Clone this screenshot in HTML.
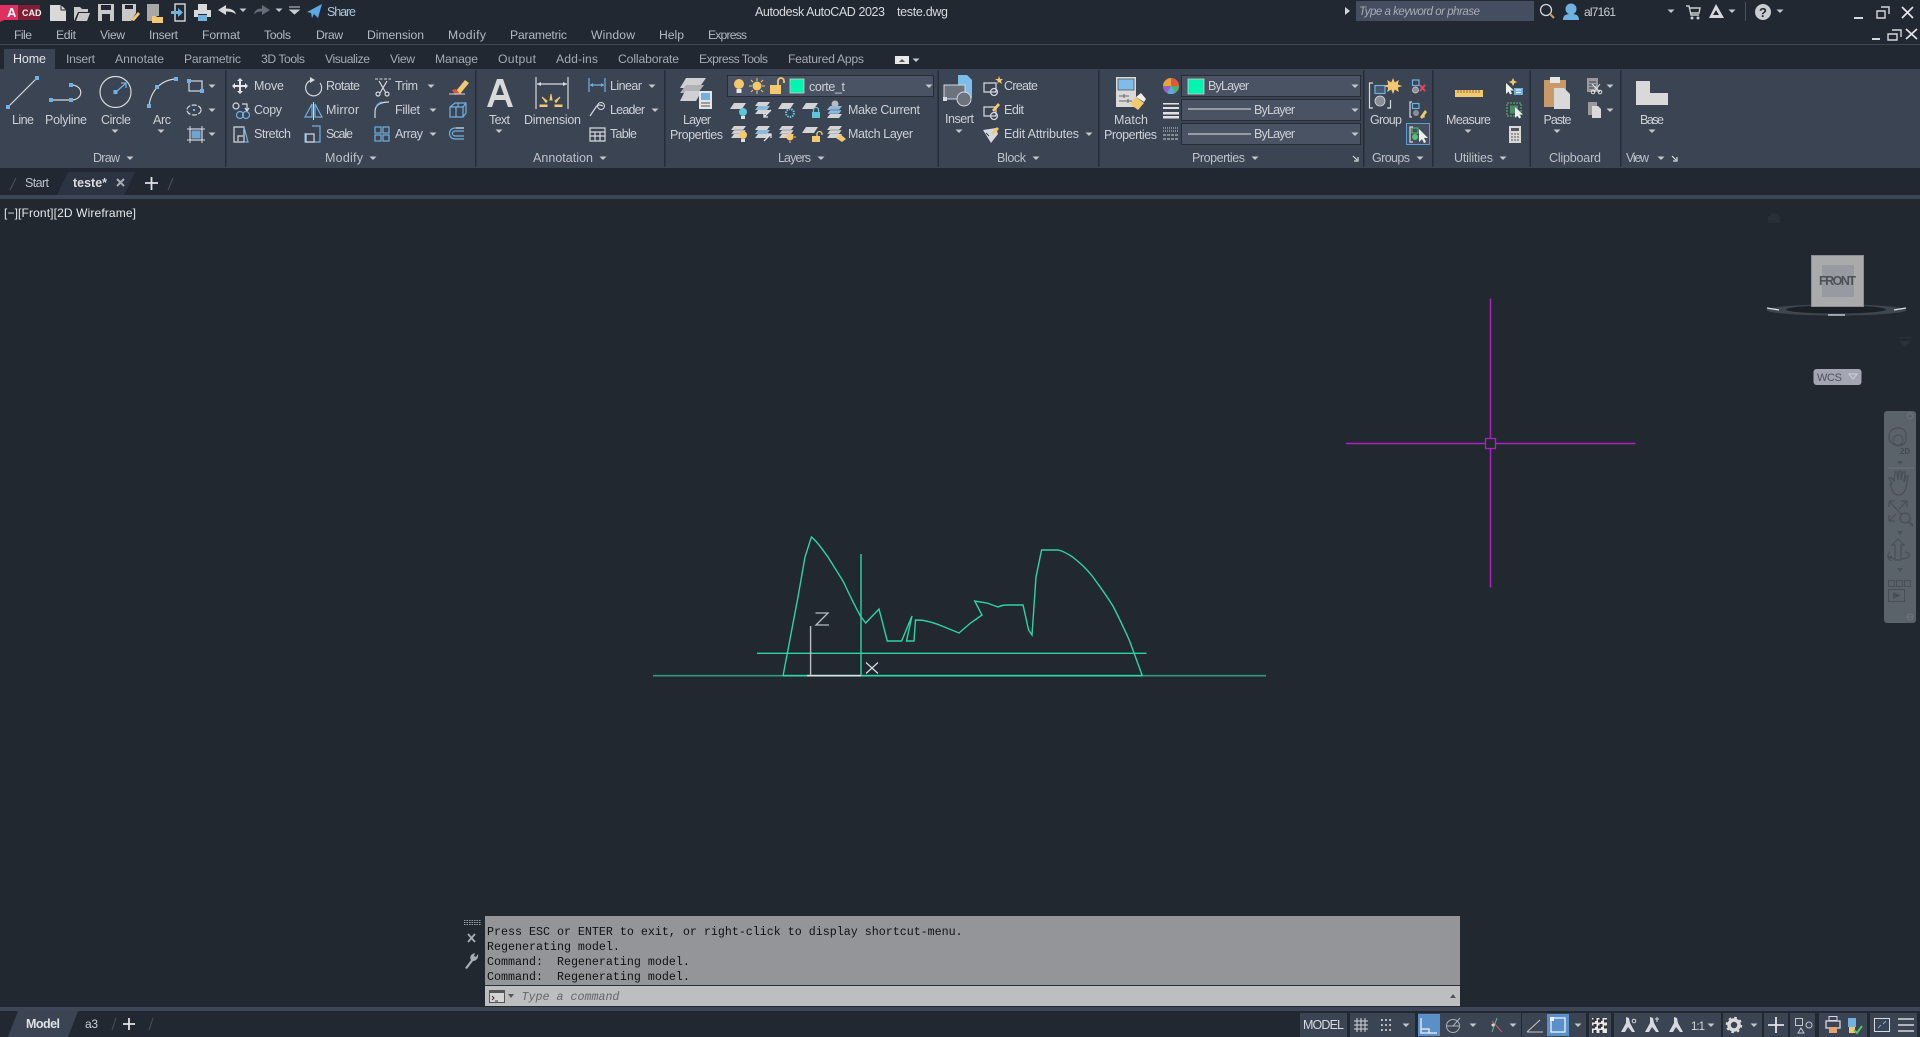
<!DOCTYPE html>
<html><head><meta charset="utf-8"><title>Autodesk AutoCAD 2023 teste.dwg</title>
<style>
html,body{margin:0;padding:0;background:#212830;width:1920px;height:1037px;overflow:hidden}
svg{display:block;position:absolute;left:0;top:0}
text{font-family:"Liberation Sans",sans-serif;font-size:12.5px;fill:#cdd1d7}
.m{fill:#b4b9c1;font-size:12.2px}
.t{fill:#a5abb4;font-size:12.2px}
.p{fill:#bcc1c9}
.c{font-family:"Liberation Mono",monospace;font-size:11.67px;fill:#111;white-space:pre}
.i{stroke:#d6d9dd;stroke-width:1.2;fill:none}
.b{stroke:#6fb1e0;stroke-width:1.2;fill:none}
.g{fill:#d9d9d9}
.bf{fill:#6fb1e0}
.y{fill:#f4c96e}
</style></head><body>
<svg width="1920" height="1037" viewBox="0 0 1920 1037" xmlns="http://www.w3.org/2000/svg">
<defs>
<polygon id="a" points="-3.5,-1.5 3.5,-1.5 0,2" fill="#c4c8ce"/>
<polygon id="l" points="3,0 15,0 11,6 -1,6" fill="#d4d4d4"/>
<g id="st"><polygon points="0,4 12,4 15,0 3,0" fill="#d4d4d4"/><polygon points="0,8 12,8 15,4 3,4" fill="#8db9dc"/><polygon points="0,12 12,12 15,8 3,8" fill="#d4d4d4"/></g>
<rect id="s" x="-2" y="-2" width="4" height="4" fill="#6fb1e0"/>
</defs>

<!-- backgrounds -->
<rect width="1920" height="199" fill="#212832"/>
<rect y="199" width="1920" height="808" fill="#21282f"/>
<rect y="44" width="1920" height="1" fill="#3f4753"/>
<rect y="69" width="1920" height="99" fill="#3b4453"/>
<rect x="4" y="49" width="51" height="20" fill="#3b4453"/>
<rect y="195" width="1920" height="4" fill="#3d4657"/>
<rect y="1007" width="1920" height="4" fill="#3d4657"/>
<rect y="1011" width="1920" height="26" fill="#212832"/>

<!-- logo -->
<polygon points="0,5 18,5 18,20 4,20 0,22" fill="#e0305f"/>
<rect x="18" y="5" width="22" height="15" fill="#7d1f35"/>
<text x="7" y="17" style="font-size:13px;font-weight:bold;fill:#fff">A</text>
<text x="22" y="16" style="font-size:9px;font-weight:bold;fill:#f2f2f2">CAD</text>

<!-- QAT -->
<path d="M50 5h11l5 5v11H50z" class="g"/><path d="M61 5v5h5" fill="none" stroke="#212832"/>
<path d="M74 21V7h6l2 2h6v3h-10l-4 9zM76 21l3-8h11l-3 8z" fill="#c9c9c9"/>
<path d="M98 4h16v17H98z" fill="#c9c9c9"/><rect x="101" y="5" width="10" height="5" fill="#212832"/><rect x="102" y="14" width="8" height="7" fill="#212832"/>
<path d="M122 4h14v9l-5 8h-9z" fill="#c9c9c9"/><rect x="125" y="5" width="8" height="4" fill="#212832"/><path d="M131 20l7-8 2 2-6 7z" class="y"/>
<path d="M147 4h12v12h-3v5h-9z" fill="#a8a8a8"/><path d="M152 16h4l1 1h6v6h-11z" class="y"/>
<rect x="175" y="4" width="10" height="17" fill="none" stroke="#d9d9d9" stroke-width="1.4"/><path d="M171 11h7v-3l5 4.500-5 4.500v-3h-7z" fill="#6fb1e0"/>
<path d="M198 4h9v6h-9z" class="g"/><path d="M194 10h17v7h-17z" class="g"/><rect x="198" y="15" width="9" height="6" fill="#6fb1e0"/><rect x="198" y="14" width="9" height="1" fill="#212832"/>
<path d="M218 10l8-5v3.500c5 0 9 1.500 10 6-2-2-5-3-10-3V15z" class="g"/>
<use href="#a" x="243" y="10"/>
<path d="M270 10l-8-5v3.500c-5 0-7 1.500-8 6 2-2 3-3 8-3V15z" fill="#666d78"/>
<use href="#a" x="279" y="10"/>
<path d="M289 7h11M290 10h9l-4.500 4z" stroke="#c9ccd2" fill="#c9ccd2"/>
<path d="M307 12l15-8-4 14-4-4-2 4-1-5z" fill="#5aa9e0"/>
<text x="327" y="16" style="fill:#a9c6de" textLength="29">Share</text>
<text x="755" y="16" style="fill:#d7dade" textLength="130">Autodesk AutoCAD 2023</text>
<text x="897" y="16" style="fill:#d7dade" textLength="51">teste.dwg</text>

<!-- Top right -->
<polygon points="1345,7 1350,11 1345,15" fill="#d0d3d8"/>
<rect x="1356" y="1" width="178" height="20" fill="#454e60"/>
<text x="1359" y="15" style="font-style:italic;fill:#a8adb5;font-size:11.500px" textLength="121">Type a keyword or phrase</text>
<circle cx="1546" cy="10" r="5.500" fill="none" stroke="#d2d5da" stroke-width="1.3"/><path d="M1550 14l4 4" stroke="#d69a4c" stroke-width="2"/>
<circle cx="1571" cy="9" r="5.500" fill="#6fb1e0"/><path d="M1563 20c0-5 3-6 8-6s8 1 8 6z" fill="#6fb1e0"/>
<text x="1584" y="16" style="fill:#c9cdd3;font-size:12px" textLength="32">al7161</text>
<use href="#a" x="1671" y="11"/>
<path d="M1686 6h3l2 9h8M1690 8h10l-1 5h-8" fill="none" stroke="#c9ccd2" stroke-width="1.400"/><circle cx="1692" cy="18" r="1.500" fill="#c9ccd2"/><circle cx="1698" cy="18" r="1.500" fill="#c9ccd2"/>
<path d="M1716 4l8 14h-15zM1716 10l-3 5h6z" fill="#d6d9dd" fill-rule="evenodd"/>
<use href="#a" x="1732" y="11"/>
<rect x="1745" y="2" width="1" height="19" fill="#4a525e"/>
<circle cx="1763" cy="12" r="8" fill="#c9ccd1"/><text x="1759" y="17" style="font-size:13px;font-weight:bold;fill:#212832">?</text>
<use href="#a" x="1780" y="11"/>
<path d="M1854 18h9" stroke="#d5d8dc" stroke-width="2"/>
<path d="M1881 7h8v7M1877 11h8v7h-8z" fill="none" stroke="#d5d8dc" stroke-width="1.400"/>
<path d="M1902 7l11 11M1913 7l-11 11" stroke="#e2e4e7" stroke-width="1.700"/>
<path d="M1872 39h8" stroke="#d5d8dc" stroke-width="2"/>
<path d="M1892 30h9v7M1888 34h9v6h-9z" fill="none" stroke="#d5d8dc" stroke-width="1.400"/>
<path d="M1906 29l11 10M1917 29l-11 10" stroke="#e2e4e7" stroke-width="1.700"/>

<!-- Menu -->
<text class="m" y="39" x="14" textLength="18">File</text>
<text class="m" y="39" x="56" textLength="20">Edit</text>
<text class="m" y="39" x="100" textLength="25">View</text>
<text class="m" y="39" x="149" textLength="29">Insert</text>
<text class="m" y="39" x="202" textLength="38">Format</text>
<text class="m" y="39" x="264" textLength="27">Tools</text>
<text class="m" y="39" x="316" textLength="27">Draw</text>
<text class="m" y="39" x="367" textLength="57">Dimension</text>
<text class="m" y="39" x="448" textLength="38">Modify</text>
<text class="m" y="39" x="510" textLength="57">Parametric</text>
<text class="m" y="39" x="591" textLength="44">Window</text>
<text class="m" y="39" x="659" textLength="25">Help</text>
<text class="m" y="39" x="708" textLength="39">Express</text>

<!-- Tabs -->
<text y="63" x="13" style="fill:#e2e4e7" textLength="33">Home</text>
<text class="t" y="63" x="66" textLength="29">Insert</text>
<text class="t" y="63" x="115" textLength="49">Annotate</text>
<text class="t" y="63" x="184" textLength="57">Parametric</text>
<text class="t" y="63" x="261" textLength="44">3D Tools</text>
<text class="t" y="63" x="325" textLength="45">Visualize</text>
<text class="t" y="63" x="390" textLength="25">View</text>
<text class="t" y="63" x="435" textLength="43">Manage</text>
<text class="t" y="63" x="498" textLength="38">Output</text>
<text class="t" y="63" x="556" textLength="42">Add-ins</text>
<text class="t" y="63" x="618" textLength="61">Collaborate</text>
<text class="t" y="63" x="699" textLength="69">Express Tools</text>
<text class="t" y="63" x="788" textLength="76">Featured Apps</text>
<rect x="895" y="56" width="14" height="8" fill="#e8e8e8"/><polygon points="899,62 905,62 902,59" fill="#555"/>
<use href="#a" x="916" y="60"/>

<!-- separators -->
<g fill="#262d38">
<rect x="225" y="70" width="1.500" height="97"/><rect x="475" y="70" width="1.500" height="97"/><rect x="664" y="70" width="1.500" height="97"/><rect x="937.500" y="70" width="1.500" height="97"/><rect x="1098" y="70" width="1.500" height="97"/><rect x="1363" y="70" width="1.500" height="97"/><rect x="1432" y="70" width="1.500" height="97"/><rect x="1529.500" y="70" width="1.500" height="97"/><rect x="1620" y="70" width="1.500" height="97"/>
</g>

<!-- Panel labels -->
<text class="p" y="162" x="93" textLength="27">Draw</text><use href="#a" x="130" y="158"/>
<text class="p" y="162" x="325" textLength="38">Modify</text><use href="#a" x="373" y="158"/>
<text class="p" y="162" x="533" textLength="60">Annotation</text><use href="#a" x="603" y="158"/>
<text class="p" y="162" x="778" textLength="33">Layers</text><use href="#a" x="821" y="158"/>
<text class="p" y="162" x="997" textLength="29">Block</text><use href="#a" x="1036" y="158"/>
<text class="p" y="162" x="1192" textLength="53">Properties</text><use href="#a" x="1255" y="158"/>
<text class="p" y="162" x="1372" textLength="38">Groups</text><use href="#a" x="1420" y="158"/>
<text class="p" y="162" x="1454" textLength="39">Utilities</text><use href="#a" x="1503" y="158"/>
<text class="p" y="162" x="1549" textLength="52">Clipboard</text>
<text class="p" y="162" x="1626" textLength="23">View</text><use href="#a" x="1661" y="158"/>
<path d="M1353 156l4 4M1358 157v4h-4" class="i" stroke-width="1"/>
<path d="M1672 156l4 4M1677 157v4h-4" class="i" stroke-width="1"/>

<!-- Draw -->
<path d="M8 107L37 78" class="i"/><use href="#s" x="8" y="107"/><use href="#s" x="37" y="78"/>
<path d="M51 100h20M71 85c13 0 13 15 0 15" class="i"/><use href="#s" x="51" y="100"/><use href="#s" x="71" y="100"/><use href="#s" x="71" y="85"/>
<circle cx="115.500" cy="92" r="15.500" class="i"/><path d="M116 92l10-9M121 83h5v5" class="b"/><use href="#s" x="115.500" y="92"/>
<path d="M149 106c2-16 12-26 27-27" class="i"/><use href="#s" x="149" y="106"/><use href="#s" x="157" y="87"/><use href="#s" x="176" y="79"/>
<text x="12" y="124" textLength="22">Line</text>
<text x="45" y="124" textLength="42">Polyline</text>
<text x="101" y="124" textLength="30">Circle</text><use href="#a" x="115" y="131"/>
<text x="153" y="124" textLength="18">Arc</text><use href="#a" x="161" y="131"/>
<rect x="189" y="81" width="13" height="10" class="i"/><use href="#s" x="189" y="81"/><use href="#s" x="202" y="91"/><use href="#a" x="212" y="86"/>
<ellipse cx="194" cy="110" rx="7" ry="5" class="i" stroke-dasharray="5 1.500"/><rect x="193" y="109" width="2" height="2" fill="#6fb1e0"/><use href="#a" x="212" y="110"/>
<rect x="190" y="129" width="12" height="11" class="i"/><rect x="191.500" y="130.500" width="9" height="8" fill="#6fa4cf"/><path d="M187 129h18M187 140h18M190 126v17M202 126v17" stroke="#d6d9dd" fill="none"/><use href="#a" x="212" y="134"/>

<!-- Modify -->
<path d="M240 78l3 3h-2v4h4v-2l3 3-3 3v-2h-4v4h2l-3 3-3-3h2v-4h-4v2l-3-3 3-3v2h4v-4h-2z" fill="#e4e6e9"/>
<circle cx="236" cy="106" r="3" class="i"/><path d="M242 104h5v6M245 108l2 3 2-3" class="i"/><circle cx="240" cy="115" r="3.500" class="b"/><circle cx="246" cy="115" r="3.500" class="b"/>
<path d="M234 127h10v15h-10zM238 141v-5h5" class="i"/><path d="M244 127l4 15h-4" class="b"/>
<path d="M320 83a8 8 0 1 1-8-3" class="i" stroke-width="1.500"/><path d="M310 77l5 3-5 3z" fill="#d6d9dd"/>
<path d="M312 104v13h-7zM315 104v13h7z" class="b"/><path d="M313.500 102v18" stroke="#d6d9dd"/>
<path d="M312 126h8v16h-15v-9" class="b"/><rect x="306" y="134" width="8" height="8" class="i"/>
<path d="M375 79h16" stroke="#d6d9dd" stroke-dasharray="3 1.500"/><path d="M379 81l7 12M387 81l-7 12" class="i" stroke-width="1.500"/><circle cx="378" cy="94" r="2" class="i"/><circle cx="387" cy="94" r="2" class="i"/>
<path d="M375 118v-6c0-6 4-10 14-10" class="i"/><path d="M382 102c-3 1-5 3-6 5" class="b"/>
<rect x="375" y="127" width="6" height="6" class="b"/><rect x="383" y="127" width="6" height="6" class="b"/><rect x="375" y="135" width="6" height="6" class="b"/><rect x="383" y="135" width="6" height="6" class="b"/>
<text x="254" y="90" textLength="30">Move</text><text x="254" y="114" textLength="28">Copy</text><text x="254" y="138" textLength="37">Stretch</text>
<text x="326" y="90" textLength="34">Rotate</text><text x="326" y="114" textLength="33">Mirror</text><text x="326" y="138" textLength="27">Scale</text>
<text x="395" y="90" textLength="23">Trim</text><text x="395" y="114" textLength="25">Fillet</text><text x="395" y="138" textLength="28">Array</text>
<use href="#a" x="431" y="86"/><use href="#a" x="433" y="110"/><use href="#a" x="433" y="134"/>
<path d="M456 91l9-11 4 3-9 11z" class="y"/><path d="M452 90l4-1 4 5-5 1z" fill="#e0563f"/><path d="M449 94h16" stroke="#d6d9dd"/>
<path d="M450 107h13v10h-13zM450 107l5-4h11v10l-3 4M463 107l3-4M456 107v10M458 103v4" class="b"/>
<path d="M464 128h-9a5 5 0 0 0 0 11h9M464 131h-9a2.500 2.500 0 0 0 0 5h9" class="b"/><path d="M464 128h-8" class="i"/>

<!-- Annotation -->
<path d="M487 107L497 79h6l10 28h-5l-2.500-7h-11l-2.500 7zM496 95h8l-4-11z" fill="#d9d9d9" fill-rule="evenodd"/>
<text x="489" y="124" textLength="21">Text</text><use href="#a" x="499" y="131"/>
<path d="M536 77v32M568 77v32M537 84h30" class="i"/><path d="M537 84l4-2v4zM567 84l-4-2v4z" fill="#d6d9dd"/>
<path d="M551 94l1 6-2 0zM542 97l5 4-1 1.500zM560 97l-5 4 1 1.500zM540 105h7v1.500h-7zM555 105h7v1.500h-7z" class="y" stroke="#f4c96e"/>
<text x="524" y="124" textLength="57">Dimension</text>
<path d="M589 78v14M605 78v14M590 85h14" class="b"/><path d="M590 85l3-2v4zM604 85l-3-2v4z" fill="#6fb1e0"/>
<path d="M590 116l6-9c2-3 5-2 7-1" class="i"/><circle cx="601" cy="106" r="3.500" fill="none" stroke="#d6d9dd"/>
<path d="M590 128h15v13h-15zM590 132h15M590 136h15M595 132v9M600 132v9" class="i"/>
<text x="610" y="90" textLength="32">Linear</text><text x="610" y="114" textLength="35">Leader</text><text x="610" y="138" textLength="27">Table</text>
<use href="#a" x="652" y="86"/><use href="#a" x="655" y="110"/>

<!-- Layers -->
<polygon points="686,78 706,78 699,88 680,88" fill="#cfd0d1"/><polygon points="686,85 704,85 698,93 680,93" fill="#b0b2b4"/><polygon points="685,91 702,91 696,101 680,101" fill="#cfd0d1"/>
<rect x="699" y="91" width="13" height="18" fill="#e5e5e5"/><rect x="701" y="93" width="9" height="7" fill="#6fb1e0"/><path d="M701 103h9M701 106h9" stroke="#555"/>
<text x="683" y="124" textLength="28">Layer</text><text x="670" y="139" textLength="53">Properties</text>
<rect x="727.500" y="75.500" width="206" height="21" fill="#4a5364" stroke="#252c36"/>
<circle cx="739" cy="84" r="5" class="y"/><rect x="736.500" y="89" width="5" height="4" fill="#e8e8e8"/>
<circle cx="757" cy="86" r="4.500" class="y"/><path d="M757 78v3M757 91v3M749 86h3M762 86h3M751 80l2 2M763 80l-2 2M751 92l2-2M763 92l-2-2" stroke="#f4c96e"/>
<rect x="770" y="85" width="11" height="9" class="y"/><path d="M778 85v-4a3 3 0 0 1 6 0v2" fill="none" stroke="#f4c96e" stroke-width="1.800"/>
<rect x="790" y="79" width="14" height="14" fill="#00f5b0" stroke="#d0d0d0" stroke-width=".8"/>
<text x="809" y="91" textLength="36">corte_t</text>
<use href="#l" x="731" y="103"/><circle cx="743" cy="112" r="4" fill="#5dc7d9"/><rect x="741" y="116" width="4" height="3" fill="#ddd"/>
<use href="#st" x="755" y="102"/><path d="M771 110l-7 7M764 113v4h4" stroke="#e4e4e4" fill="none" stroke-width="1.300"/>
<use href="#l" x="779" y="103"/><circle cx="790" cy="113" r="4" fill="none" stroke="#5dc7d9" stroke-width="2" stroke-dasharray="1.500 1"/>
<use href="#l" x="803" y="103"/><rect x="812" y="112" width="8" height="6" fill="#5dc7d9"/><path d="M813.500 112v-2a2.500 2.500 0 0 1 5 0v2" fill="none" stroke="#5dc7d9" stroke-width="1.300"/>
<circle cx="835" cy="104" r="3.500" fill="#bbb"/><g transform="translate(827,106)"><polygon points="0,4 12,4 15,0 3,0" fill="#8db9dc"/><polygon points="0,8 12,8 15,4 3,4" fill="#8db9dc" stroke="#212832" stroke-width=".4"/><polygon points="0,12 12,12 15,8 3,8" fill="#d4d4d4"/></g>
<g transform="translate(731,126)"><polygon points="0,4 12,4 15,0 3,0" fill="#d4d4d4"/><polygon points="0,8 12,8 15,4 3,4" fill="#d4d4d4" stroke="#3b4453" stroke-width=".4"/><polygon points="0,12 12,12 15,8 3,8" fill="#d4d4d4"/></g><circle cx="743" cy="135" r="4" class="y"/><rect x="741" y="139" width="4" height="3" fill="#ddd"/>
<use href="#st" x="755" y="126"/><path d="M764 141l7-7M767 134h4v4" stroke="#e4e4e4" fill="none" stroke-width="1.300"/>
<g transform="translate(779,126)"><polygon points="0,4 12,4 15,0 3,0" fill="#d4d4d4"/><polygon points="0,8 12,8 15,4 3,4" fill="#d4d4d4" stroke="#3b4453" stroke-width=".4"/><polygon points="0,12 12,12 15,8 3,8" fill="#d4d4d4"/></g><circle cx="790" cy="137" r="3.500" class="y"/><path d="M790 131v2M790 141v2M784 137h2M794 137h2" stroke="#f4c96e"/>
<use href="#l" x="803" y="127"/><rect x="812" y="136" width="8" height="6" class="y"/><path d="M817 136v-2a2.500 2.500 0 0 1 5 0v1" fill="none" stroke="#f4c96e" stroke-width="1.300"/>
<g transform="translate(827,126)"><polygon points="0,4 12,4 15,0 3,0" fill="#d4d4d4"/><polygon points="0,8 12,8 15,4 3,4" fill="#d4d4d4" stroke="#3b4453" stroke-width=".4"/><polygon points="0,12 12,12 15,8 3,8" fill="#d4d4d4"/></g><path d="M836 138l4-4 6 5-4 3z" class="y"/>
<text x="848" y="114" textLength="72">Make Current</text><text x="848" y="138" textLength="65">Match Layer</text>
<use href="#a" x="929" y="86"/>

<!-- Block -->
<path d="M958 75h9l5 5v18h-14z" fill="#7ebcea"/>
<rect x="944" y="85" width="21" height="14" fill="#6d737c" stroke="#d6d9dd"/><circle cx="964" cy="99" r="7" fill="#6d737c" stroke="#d6d9dd"/><rect x="943" y="97" width="4" height="4" fill="#d6d9dd"/>
<text x="945" y="123" textLength="29">Insert</text><use href="#a" x="959" y="131"/>
<path d="M984 83h12v9h-12z" class="i"/><circle cx="994" cy="92" r="3.500" class="i"/><path d="M995 79l3 0 1-3 1 3h3l-2 2 1 3-3-2-2 2 1-3z" class="y"/>
<path d="M984 107h12v9h-12z" class="i"/><circle cx="994" cy="116" r="3.500" class="i"/><path d="M992 110l6-7 2 2-6 7z" class="y"/>
<path d="M983 130l13-2 2 6-7 9z" fill="#d6d9dd"/><path d="M991 133l6-6 2 2-6 6z" class="y"/><path d="M986 133l3 3" stroke="#3b4453"/>
<text x="1004" y="90" textLength="34">Create</text><text x="1004" y="114" textLength="20">Edit</text><text x="1004" y="138" textLength="75">Edit Attributes</text><use href="#a" x="1089" y="134"/>

<!-- Properties -->
<rect x="1116" y="77" width="20" height="30" fill="#d9d9d9"/><rect x="1118" y="79" width="16" height="11" fill="#7ebcea" stroke="#555" stroke-width=".8"/>
<path d="M1119 96h10M1119 101h13M1124 94v4M1128 99v4" stroke="#666"/><path d="M1130 104l6-7 8 6-6 7z" class="y"/><path d="M1136 97l5-4 5 6-2 3z" fill="#efefef"/>
<text x="1114" y="124" textLength="34">Match</text><text x="1104" y="139" textLength="53">Properties</text>
<circle cx="1171" cy="86" r="8" fill="#e8a33d"/><path d="M1171 86V78a8 8 0 0 1 8 8z" fill="#e0563f"/><path d="M1171 86h8a8 8 0 0 1-4 7z" fill="#4fb06e"/><path d="M1171 86l4 7a8 8 0 0 1-8 0z" fill="#5aa9e0"/><path d="M1171 86l-4 7a8 8 0 0 1-4-7z" fill="#9a5ec4"/>
<path d="M1163 103h16v1.500h-16zM1163 107h16v2h-16zM1163 112h16v2.500h-16z" fill="#e0e0e0"/><rect x="1163" y="116" width="16" height="2.500" fill="#e0e0e0"/>
<path d="M1163 128h15M1163 131h15" stroke="#d0d0d0" stroke-dasharray="1 1"/><path d="M1163 135h15M1163 139h15" stroke="#d0d0d0" stroke-dasharray="3 1"/>
<rect x="1181.500" y="75.500" width="179" height="21" fill="#4a5364" stroke="#252c36"/>
<rect x="1181.500" y="99.500" width="179" height="21" fill="#4a5364" stroke="#252c36"/>
<rect x="1181.500" y="123.500" width="179" height="21" fill="#4a5364" stroke="#252c36"/>
<rect x="1188" y="79" width="16" height="15" fill="#00f5b0" stroke="#d0d0d0" stroke-width=".8"/>
<text x="1208" y="90" textLength="41">ByLayer</text>
<path d="M1188 109h63M1188 134h63" stroke="#e4e4e4"/>
<text x="1254" y="114" textLength="41">ByLayer</text><text x="1254" y="138" textLength="41">ByLayer</text>
<use href="#a" x="1355" y="86"/><use href="#a" x="1355" y="110"/><use href="#a" x="1355" y="134"/>

<!-- Groups -->
<path d="M1373 83h-3.500v25h3.500M1387 108h3.500v-8" class="i" stroke-width="1.500"/><rect x="1375" y="85.500" width="10" height="8" fill="#46586e" stroke="#6fb1e0" stroke-width="1.200"/><circle cx="1380" cy="101" r="5" fill="#8a8f97" stroke="#d6d9dd" stroke-width=".8"/>
<path d="M1393 78l1.800 4.500 4-2.500-1 4.500 4.500 1.500-4.500 1.500 1 4.500-4-2.500-1.800 4.500-1.800-4.500-4 2.500 1-4.500-4.500-1.500 4.500-1.500-1-4.500 4 2.500z" class="y"/>
<text x="1370" y="124" textLength="32">Group</text>
<rect x="1412.500" y="80" width="6.500" height="5.500" class="b"/><circle cx="1415.500" cy="90" r="3" fill="#8a8f97" stroke="#d6d9dd" stroke-width=".7"/><path d="M1420 85l5 6M1425 85l-5 6" stroke="#e0485a" stroke-width="2"/>
<path d="M1412 102h-2v15h2M1422 117h2v-3" class="i"/><rect x="1412.500" y="103.500" width="6.500" height="5" class="b"/><circle cx="1416" cy="113" r="3" fill="#8a8f97"/><path d="M1420 117l5-7 2 2-5 7z" class="y"/>
<rect x="1406.500" y="123.500" width="23" height="21" fill="#444e60" stroke="#5a9fd4"/>
<path d="M1413 127h-3v15h3" class="i"/><rect x="1412" y="128" width="6" height="5" fill="none" stroke="#58c06f"/><circle cx="1415" cy="137" r="3" fill="#58c06f"/><path d="M1419 129v13l3-3 2 4 2-1-2-4h4z" fill="#f0f0f0"/>

<!-- Utilities -->
<rect x="1455" y="90" width="28" height="7" class="y"/><path d="M1458 90v3M1461 90v3M1464 90v3M1467 90v3M1470 90v3M1473 90v3M1476 90v3M1479 90v3" stroke="#8a6a30"/>
<text x="1446" y="124" textLength="45">Measure</text><use href="#a" x="1468" y="131"/>
<path d="M1506 83v11l2.500-2.500 1.500 3 2-1-1.500-3h3.500z" fill="#f0f0f0"/><path d="M1513 78l1.500 3 3 1-3 1-1.500 3-1.500-3-3-1 3-1z" class="y"/><rect x="1514" y="88" width="9" height="7" fill="#6fb1e0"/><path d="M1516 90h5M1516 92.500h5" stroke="#fff"/>
<rect x="1507" y="103" width="14" height="13" fill="none" stroke="#58c06f" stroke-dasharray="2 1"/><rect x="1510" y="105.500" width="8" height="8" fill="#58c06f" opacity=".6"/><path d="M1515 107v11l2.500-2.500 1.500 3 2-1-1.500-3h3.500z" fill="#f0f0f0"/>
<rect x="1509" y="126" width="12" height="17" fill="#d9d9d9"/><rect x="1511" y="128" width="8" height="3" fill="#555"/><path d="M1511 134h2M1514 134h2M1517 134h2M1511 137h2M1514 137h2M1517 137h2M1511 140h2M1514 140h2M1517 140h2" stroke="#555"/>

<!-- Clipboard -->
<rect x="1544" y="80" width="22" height="27" fill="#c99a68"/><rect x="1550" y="77" width="10" height="6" fill="#e5e5e5"/>
<path d="M1554 88h10l6 6v15h-16z" fill="#d9d9d9"/>
<text x="1543.500" y="124" textLength="28">Paste</text><use href="#a" x="1557" y="131"/>
<rect x="1587" y="78" width="11" height="14" fill="#9a9a9a"/><path d="M1589 82h7M1589 85h7M1589 88h5" stroke="#3b4453"/><path d="M1592 84l8 8M1600 84l-6 8" stroke="#e4e4e4"/><circle cx="1593" cy="92" r="1.800" fill="none" stroke="#e4e4e4"/><circle cx="1600" cy="92" r="1.800" fill="none" stroke="#e4e4e4"/>
<rect x="1588" y="102" width="9" height="13" fill="#9a9a9a"/><path d="M1592 106h6l3 3v9h-9z" fill="#d9d9d9"/>
<use href="#a" x="1610" y="86"/><use href="#a" x="1610" y="110"/>

<!-- Base -->
<path d="M1636 81h14v12h18v12h-32z" fill="#d9d9d9"/>
<text x="1640" y="124" textLength="24">Base</text><use href="#a" x="1652" y="131"/>

<!-- File tabs -->
<path d="M10 190l6-12" stroke="#4a5260"/>
<polygon points="57,195 68,172 135,172 124,195" fill="#2d3441"/>
<text x="25" y="187" style="fill:#bcc1c9" textLength="24">Start</text>
<text x="73" y="187" style="font-weight:bold;fill:#d7dade" textLength="34">teste*</text>
<path d="M117 179l7 7M124 179l-7 7" stroke="#a8acb2" stroke-width="2"/>
<path d="M145 183h13M151.500 177v13" stroke="#e0e2e5" stroke-width="1.800"/>
<path d="M168 190l5-12" stroke="#4a5260"/>

<!-- viewport label -->
<text x="4" y="217" style="fill:#e6e8eb;font-size:12px" textLength="132">[−][Front][2D Wireframe]</text>

<!-- Crosshair -->
<path d="M1346 443.500h139M1495.500 443.500h140M1490.500 298.500v140M1490.500 448.500v139" stroke="#b020c0" stroke-width="1.500"/>
<rect x="1485.500" y="438.500" width="10" height="10" fill="none" stroke="#b020c0" stroke-width="1.300"/>

<!-- Drawing -->
<path d="M653 675.700H1266" stroke="#2f9a82" stroke-width="1.600"/>
<path d="M783 675.700H1142" stroke="#2fd8ac" stroke-width="1.600"/>
<path d="M757 653.300H1146.500" stroke="#2cd4a8" stroke-width="1.400"/>
<path d="M861 554V676" stroke="#2cd4a8" stroke-width="1.400"/>
<path d="M783 676L798 597L805 557L811.400 537C817 541 822 549 828 557C834 567 839 574 844 583C850 596 855 606 860.400 616L865.700 623L879 609L887.300 641H901.600L912 616L906.500 641H914L915.500 620C920 620 923 620 925.700 621C932 622 937 624 942 626L959 633L970.600 623L982 615L974.700 601L987 603L998 607C1002 605 1005 605 1009.400 605H1023L1028.600 630L1032 635L1036 577L1041.600 550H1058.400C1063 551 1068 554 1072.600 557C1080 563 1086 568 1093 577C1100 587 1107 596 1113.500 607C1120 620 1125 630 1130 642L1142.400 676" fill="none" stroke="#2cd4a8" stroke-width="1.400"/>
<path d="M810.600 626V676" stroke="#b9bdc2" stroke-width="1.400"/>
<path d="M807 675.700H861" stroke="#d5e6e2" stroke-width="1.600"/>
<path d="M815.500 613H828L816 625H829" fill="none" stroke="#b9bdc2" stroke-width="1.300"/>
<path d="M866 662.500L878 673.500M878 662.500L866 673.500" stroke="#d9dbde" stroke-width="1.200"/>

<!-- View cube -->
<ellipse cx="1836.500" cy="310" rx="70" ry="5.500" fill="#3e474f"/>
<ellipse cx="1836" cy="309.500" rx="50" ry="4" fill="#1a2026"/>
<path d="M1767 308l12 2M1894 310l12-2M1828 315h17" stroke="#dfe2e5" stroke-width="1.300"/>
<rect x="1811.500" y="255.500" width="52" height="51" fill="#a9abab" stroke="#8b8f94"/>
<rect x="1822" y="265" width="32" height="32" fill="#979aa0"/>
<text x="1837.500" y="285" text-anchor="middle" style="font-size:12.500px;font-weight:bold;fill:#4e5158" textLength="37">FRONT</text>
<path d="M1768 217l6-5 6 5v6h-12z" fill="#282f37"/>
<polygon points="1899,341 1911,341 1905,347" fill="#2a3138"/><rect x="1899" y="337" width="12" height="1.500" fill="#2a3138"/>
<rect x="1813.500" y="369" width="48" height="16" rx="3" fill="#a3a5b3"/>
<text x="1817" y="381" style="font-size:11px;fill:#4f535c" textLength="25">WCS</text>
<polygon points="1849,374 1857,374 1853,379" fill="none" stroke="#d0d2da"/>

<!-- Nav bar -->
<rect x="1884" y="411" width="32" height="212" rx="3" fill="#5b636a"/>
<circle cx="1910" cy="416" r="3" fill="none" stroke="#6d747b"/>
<path d="M1889 437c0-6 4-9 9-9 7 0 8 3 8 8 0 4 0 6-2 8-3 2-6 2-9 1-4-2-6-4-6-8z" fill="none" stroke="#484f57" stroke-width="1.300"/><circle cx="1898" cy="440" r="5" fill="none" stroke="#484f57"/>
<text x="1900" y="454" style="font-size:8px;font-weight:bold;fill:#434a54">2D</text>
<polygon points="1897,461 1903,461 1900,465" fill="#484f57"/>
<path d="M1888 468h26" stroke="#6b7279"/>
<path d="M1892 484l-3-6c2-1 3 0 5 3l1-9h2l1 8 1-9h2l0 9 2-8h2l-1 10 2-6h2l-2 12c-2 5-4 7-8 7s-6-4-8-11z" fill="none" stroke="#484f57" stroke-width="1.300"/>
<path d="M1889 501l13 14M1889 501v6M1889 501h6M1907 501l-8 8M1907 501v6M1907 501h-6M1889 521l7-7M1889 521v-6M1889 521h6" fill="none" stroke="#484f57" stroke-width="1.200"/>
<circle cx="1905" cy="518" r="5" fill="#5b636a" stroke="#484f57" stroke-width="1.300"/><path d="M1909 522l4 4" stroke="#484f57" stroke-width="2"/>
<polygon points="1897,531 1903,531 1900,535" fill="#484f57"/>
<path d="M1895 560v-15h-3l6-6 6 6h-3v15zM1890 552c-3 2-3 5 1 6l4 1M1905 552c5 1 6 5 2 6l-5 1M1892 556l-4 2 3 3" fill="none" stroke="#484f57" stroke-width="1.200"/>
<polygon points="1897,568 1903,568 1900,572" fill="#484f57"/>
<rect x="1888.500" y="580.500" width="6" height="6" fill="none" stroke="#484f57"/><rect x="1896.500" y="580.500" width="6" height="6" fill="none" stroke="#484f57"/><rect x="1904.500" y="580.500" width="6" height="6" fill="none" stroke="#484f57"/>
<rect x="1888.500" y="589.500" width="16" height="12" fill="none" stroke="#484f57"/><polygon points="1893,592 1901,595.500 1893,599" fill="#484f57"/>
<circle cx="1910" cy="617" r="3" fill="none" stroke="#6d747b"/><path d="M1907.500 617h5" stroke="#6d747b"/>

<!-- Command window -->
<path d="M464 920.500h17M464 922.500h17M464 924.500h17" stroke="#9a9ea3" stroke-dasharray="1.500 1"/>
<path d="M468 934l7 8M475 934l-7 8" stroke="#a9adb2" stroke-width="1.800"/>
<path d="M465 968l6-8c-2-3 0-6 4-7l-1 3 2 1 2-3c1 4-2 7-5 7l-6 8z" fill="#a9adb2"/>
<rect x="485" y="916" width="975" height="69" fill="#939598"/>
<rect x="485" y="985" width="975" height="1" fill="#2a3038"/>
<rect x="485" y="986" width="975" height="20" fill="#bdbec0"/>
<text class="c" x="487" y="935">Press ESC or ENTER to exit, or right-click to display shortcut-menu.</text>
<text class="c" x="487" y="950">Regenerating model.</text>
<text class="c" x="487" y="965" xml:space="preserve">Command:  Regenerating model.</text>
<text class="c" x="487" y="980" xml:space="preserve">Command:  Regenerating model.</text>
<rect x="489.500" y="990.500" width="15" height="12" fill="#d4d4d4" stroke="#555"/><rect x="490" y="991" width="14" height="2" fill="#555"/><path d="M492 996l2 2-2 2M495 1001h3" stroke="#333" fill="none"/>
<polygon points="508,994 514,994 511,998" fill="#555"/>
<text class="c" x="521.500" y="1000" style="font-style:italic;fill:#666">Type a command</text>
<polygon points="1450,998 1456,998 1453,994" fill="#555"/>

<!-- Layout tabs -->
<polygon points="8,1037 18,1011 78,1011 68,1037" fill="#3b4453"/>
<text x="26" y="1028" style="font-weight:bold;fill:#e0e2e5" textLength="34">Model</text>
<text x="85" y="1028" style="fill:#cdd1d7;font-size:12px" textLength="13">a3</text>
<path d="M112 1030l4-12M149 1030l4-12" stroke="#4a5260"/>
<path d="M123 1024h12M129 1018v12" stroke="#e0e2e5" stroke-width="1.800"/>

<!-- Status bar -->
<g fill="#3b4453"><rect x="1300" y="1013" width="47" height="24"/><rect x="1350" y="1013" width="65" height="24"/><rect x="1418" y="1013" width="103" height="24"/><rect x="1522" y="1013" width="64" height="24"/><rect x="1589" y="1013" width="22" height="24"/><rect x="1614" y="1013" width="107" height="24"/><rect x="1723" y="1013" width="39" height="24"/><rect x="1764" y="1013" width="24" height="24"/><rect x="1790" y="1013" width="25" height="24"/><rect x="1819" y="1013" width="48" height="24"/><rect x="1870" y="1013" width="47" height="24"/></g>
<rect x="1418" y="1014" width="22" height="22" fill="#5b8fc7"/><rect x="1547" y="1014" width="22" height="22" fill="#5b8fc7"/>
<text x="1303" y="1029" style="font-size:12.500px;fill:#d7dade" textLength="41">MODEL</text>
<path d="M1354 1021h14M1354 1025h14M1354 1029h14M1357 1018v14M1361 1018v14M1365 1018v14" stroke="#d6d9dd"/>
<path d="M1381 1020h10M1381 1025h10M1381 1030h10" stroke="#d6d9dd" stroke-dasharray="1.800 2.300" stroke-width="1.800"/>
<use href="#a" x="1406" y="1025"/>
<path d="M1421 1018v15h16M1421 1029h8v4" fill="none" stroke="#eef2f6" stroke-width="1.300"/>
<circle cx="1453" cy="1026" r="6.500" fill="none" stroke="#aab0b8"/><path d="M1453 1026l7-8M1446 1026h14" stroke="#aab0b8"/>
<use href="#a" x="1473" y="1025"/>
<path d="M1492 1021l10 11" stroke="#d0566a"/><path d="M1492 1032l5-14" stroke="#5cc08c"/><circle cx="1493" cy="1025" r="1.500" fill="#d6d9dd"/>
<use href="#a" x="1513" y="1025"/>
<path d="M1527 1032h16M1527 1032l13-12" stroke="#c4c8ce" fill="none"/>
<rect x="1551" y="1018" width="14" height="14" fill="none" stroke="#eef2f6" stroke-width="1.300"/><rect x="1550" y="1017" width="4" height="4" fill="#eef2f6"/>
<use href="#a" x="1578" y="1025"/>
<rect x="1592" y="1018" width="15" height="15" fill="#e8e8e8"/><path d="M1595 1018v15M1601 1018v15M1592 1021h15M1592 1027h15" stroke="#333" stroke-dasharray="3 3" stroke-width="3"/>
<path d="M1626 1017l3 1 1 5 5 9h-3l-4-5-3 5h-4l5-9z" fill="#d6d9dd"/><circle cx="1634" cy="1021" r="1.800" fill="none" stroke="#d6d9dd"/>
<path d="M1650 1017l3 1 1 5 5 9h-3l-4-5-3 5h-4l5-9z" fill="#d6d9dd"/><path d="M1657 1017v5M1655 1019h4" stroke="#d6d9dd"/>
<path d="M1674 1017l3 1 1 5 5 9h-3l-4-5-3 5h-4l5-9z" fill="#d6d9dd"/>
<text x="1691" y="1030" style="font-size:11.500px;fill:#d7dade" textLength="14">1:1</text>
<use href="#a" x="1711" y="1025"/>
<circle cx="1734" cy="1025" r="5" fill="none" stroke="#d9d9d9" stroke-width="3.500"/><circle cx="1734" cy="1025" r="7" fill="none" stroke="#d9d9d9" stroke-width="2.500" stroke-dasharray="2.500 3"/>
<use href="#a" x="1754" y="1025"/>
<path d="M1768 1025h16M1776 1017v16" stroke="#e0e2e5" stroke-width="1.800"/>
<rect x="1795.500" y="1018.500" width="7" height="7" fill="none" stroke="#c4c8ce"/><circle cx="1809" cy="1025" r="3" fill="none" stroke="#c4c8ce"/><path d="M1801 1028l3 5h-6z" fill="none" stroke="#c4c8ce"/>
<rect x="1826" y="1021" width="14" height="7" fill="none" stroke="#d6d9dd" stroke-width="1.300"/><rect x="1829" y="1016.500" width="8" height="4" fill="none" stroke="#d6d9dd"/><rect x="1829" y="1027" width="8" height="6" fill="#e3a474"/>
<rect x="1848" y="1018" width="8" height="9" fill="#6fb1e0"/><rect x="1849" y="1027" width="6" height="6" class="y"/><path d="M1854 1030l3 3 5-7" stroke="#58c06f" stroke-width="2" fill="none"/>
<rect x="1874.500" y="1018.500" width="15" height="13" fill="none" stroke="#d6d9dd"/><path d="M1878 1028l3-3M1886 1021l-3 3" stroke="#6fb1e0"/>
<path d="M1898 1019h16M1898 1025h16M1898 1031h16" stroke="#d6d9dd" stroke-width="1.500"/>
</svg>
</body></html>
